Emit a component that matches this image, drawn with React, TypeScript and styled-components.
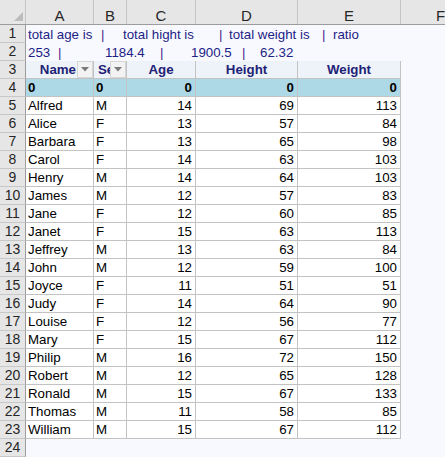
import React from "react";
import styled, { createGlobalStyle } from "styled-components";

const Global = createGlobalStyle`
  html, body { margin: 0; padding: 0; background: #f8f9fe; }
  body { font-family: "Liberation Sans", Arial, sans-serif; overflow: hidden; }
`;

const COLS = "26px 68px 33px 69px 102px 103px 80px";

const Sheet = styled.div`
  width: 445px;
  height: 457px;
  overflow: hidden;
  background: #f8f9fe;
  display: flex;
  flex-direction: column;
`;

const HeaderBar = styled.div`
  display: grid;
  grid-template-columns: ${COLS};
  height: 27px;
  background: #e6e6e6;
  border-bottom: 1px solid #9c9c9c;
  box-sizing: border-box;
`;

const Corner = styled.div`
  position: relative;
  border-right: 1px solid #c4c4c4;
`;

const CornerTri = styled.div`
  position: absolute;
  right: 2px;
  bottom: 3px;
  width: 0;
  height: 0;
  border-left: 9px solid transparent;
  border-bottom: 9px solid #bcbcbc;
`;

const ColLetter = styled.div`
  display: flex;
  align-items: flex-end;
  justify-content: center;
  padding-bottom: 0;
  font-size: 15px;
  line-height: 17px;
  color: #262626;
  border-right: 1px solid #c4c4c4;
  box-sizing: border-box;
`;

const Row = styled.div`
  display: grid;
  grid-template-columns: ${COLS};
  height: 18px;
`;

const RowNum = styled.div`
  background: #e6e6e6;
  border-right: 1px solid #9c9c9c;
  border-bottom: 1px solid #c8c8c8;
  box-sizing: border-box;
  font-size: 14px;
  color: #262626;
  display: flex;
  align-items: center;
  justify-content: center;
  line-height: 17px;
`;

type CellKind = "head" | "total" | "data";

const Cell = styled.div<{ $kind: CellKind; $right?: boolean }>`
  box-sizing: border-box;
  border-right: 1px solid #c3c3c3;
  border-bottom: 1px solid #c3c3c3;
  background: ${(p) =>
    p.$kind === "head" ? "#eef2f9" : p.$kind === "total" ? "#add8e6" : "#ffffff"};
  font-size: 13.3px;
  font-weight: ${(p) => (p.$kind === "data" ? 400 : 700)};
  color: ${(p) => (p.$kind === "head" ? "#1e2276" : "#000")};
  display: flex;
  align-items: center;
  justify-content: ${(p) => (p.$right ? "flex-end" : "flex-start")};
  padding: 0 3px 0 2px;
  line-height: 17px;
  white-space: nowrap;
  overflow: hidden;
  position: relative;
`;

const HeadCell = styled(Cell)`
  justify-content: center;
  padding: 0 2px;
`;

const HeadLabel = styled.span`
  flex: 1;
  text-align: center;
  overflow: hidden;
`;

const FilterLabel = styled.span<{ $left?: boolean }>`
  flex: 1;
  text-align: ${(p) => (p.$left ? "left" : "right")};
  padding-right: ${(p) => (p.$left ? 0 : 15)}px;
  padding-left: ${(p) => (p.$left ? 2 : 0)}px;
  overflow: hidden;
  white-space: nowrap;
`;

const FilterBtn = styled.div`
  position: absolute;
  right: 0;
  top: 0;
  width: 16px;
  height: 17px;
  box-sizing: border-box;
  background: #f3f3f3;
  border: 1px solid #d6d6d6;
  display: flex;
  align-items: center;
  justify-content: center;
`;

const Empty = styled.div``;

const InfoLine = styled.div`
  grid-column: 2 / 8;
  display: flex;
  align-items: center;
  font-size: 13.3px;
  white-space: pre;
  padding-left: 2px;
  line-height: 17px;
`;

const Seg = styled.span<{ $w: number; $pipe?: boolean }>`
  display: inline-block;
  flex: none;
  width: ${(p) => p.$w}px;
  color: ${(p) => (p.$pipe ? "#4b1a8c" : "#1c2286")};
`;

const Arrow = () => (
  <svg width="8" height="5" viewBox="0 0 8 5">
    <path d="M0 0 H8 L4 4.5 Z" fill="#7a7a7a" />
  </svg>
);

const data: [string, string, number, number, number][] = [
  ["Alfred", "M", 14, 69, 113],
  ["Alice", "F", 13, 57, 84],
  ["Barbara", "F", 13, 65, 98],
  ["Carol", "F", 14, 63, 103],
  ["Henry", "M", 14, 64, 103],
  ["James", "M", 12, 57, 83],
  ["Jane", "F", 12, 60, 85],
  ["Janet", "F", 15, 63, 113],
  ["Jeffrey", "M", 13, 63, 84],
  ["John", "M", 12, 59, 100],
  ["Joyce", "F", 11, 51, 51],
  ["Judy", "F", 14, 64, 90],
  ["Louise", "F", 12, 56, 77],
  ["Mary", "F", 15, 67, 112],
  ["Philip", "M", 16, 72, 150],
  ["Robert", "M", 12, 65, 128],
  ["Ronald", "M", 15, 67, 133],
  ["Thomas", "M", 11, 58, 85],
  ["William", "M", 15, 67, 112],
];

// [start x relative to text start, text, is pipe]
const line1: [number, string, boolean?][] = [
  [0, "total age is"],
  [73, "|", true],
  [95, "total hight is"],
  [191, "|", true],
  [201, "total weight is"],
  [294, "|", true],
  [305, "ratio"],
];
const line2: [number, string, boolean?][] = [
  [0, "253"],
  [30, "|", true],
  [77, "1184.4"],
  [132, "|", true],
  [163, "1900.5"],
  [214, "|", true],
  [232, "62.32"],
];

function widths(segs: [number, string, boolean?][]) {
  return segs.map((s, i) => ({
    text: s[1],
    pipe: s[2],
    w: i + 1 < segs.length ? segs[i + 1][0] - s[0] : 60,
  }));
}

export default function App() {
  return (
    <Sheet>
      <Global />
      <HeaderBar>
        <Corner>
          <CornerTri />
        </Corner>
        {["A", "B", "C", "D", "E", "F"].map((c) => (
          <ColLetter key={c}>{c}</ColLetter>
        ))}
      </HeaderBar>
      {[line1, line2].map((segs, i) => (
        <Row key={"info" + i}>
          <RowNum>{i + 1}</RowNum>
          <InfoLine>
            {widths(segs).map((s, j) => (
              <Seg key={j} $w={s.w} $pipe={s.pipe}>
                {s.text}
              </Seg>
            ))}
          </InfoLine>
        </Row>
      ))}
      <Row>
        <RowNum>3</RowNum>
        <HeadCell $kind="head">
          <FilterLabel>Name</FilterLabel>
          <FilterBtn>
            <Arrow />
          </FilterBtn>
        </HeadCell>
        <HeadCell $kind="head">
          <FilterLabel $left>Sex</FilterLabel>
          <FilterBtn>
            <Arrow />
          </FilterBtn>
        </HeadCell>
        <HeadCell $kind="head">
          <HeadLabel>Age</HeadLabel>
        </HeadCell>
        <HeadCell $kind="head">
          <HeadLabel>Height</HeadLabel>
        </HeadCell>
        <HeadCell $kind="head">
          <HeadLabel>Weight</HeadLabel>
        </HeadCell>
        <Empty />
      </Row>
      <Row>
        <RowNum>4</RowNum>
        <Cell $kind="total">0</Cell>
        <Cell $kind="total">0</Cell>
        <Cell $kind="total" $right>0</Cell>
        <Cell $kind="total" $right>0</Cell>
        <Cell $kind="total" $right>0</Cell>
        <Empty />
      </Row>
      {data.map((d, i) => (
        <Row key={d[0]}>
          <RowNum>{i + 5}</RowNum>
          <Cell $kind="data">{d[0]}</Cell>
          <Cell $kind="data">{d[1]}</Cell>
          <Cell $kind="data" $right>{d[2]}</Cell>
          <Cell $kind="data" $right>{d[3]}</Cell>
          <Cell $kind="data" $right>{d[4]}</Cell>
          <Empty />
        </Row>
      ))}
      <Row>
        <RowNum>24</RowNum>
        <Empty />
      </Row>
    </Sheet>
  );
}
